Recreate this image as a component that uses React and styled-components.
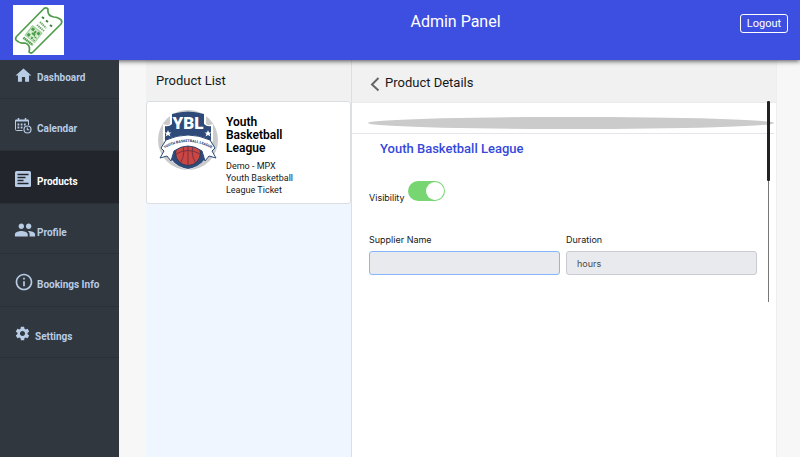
import React, { useState } from "react";
import styled, { createGlobalStyle } from "styled-components";
import { MdHome, MdPeople, MdInfoOutline, MdSettings } from "react-icons/md";

const GlobalStyle = createGlobalStyle`
  * {
    box-sizing: border-box;
  }
  body {
    margin: 0;
    font-family: Roboto, "Liberation Sans", sans-serif;
    color: #16181b;
    background-color: #f7f7f7;
  }
  h1, h2, h3, p {
    margin: 0;
    font-weight: 400;
  }
`;

const Page = styled.div`
  display: flex;
  flex-direction: column;
  min-height: 100vh;
`;

const Header = styled.header`
  display: grid;
  grid-template-columns: 1fr auto 1fr;
  align-items: start;
  height: 60px;
  padding: 5px 12px 0 13px;
  color: #fff;
  background-color: #3d4fe0;
  box-shadow: 0 1px 5px rgba(0, 0, 0, 0.7);
  z-index: 1;
`;

const HeaderTitle = styled.h1`
  padding: 7px 0 0 110px;
  font-size: 16px;
  line-height: 20px;
`;

const LogoutButton = styled.button`
  justify-self: end;
  width: 48px;
  height: 19px;
  margin-top: 9px;
  padding: 0;
  border: 1px solid #fff;
  border-radius: 3px;
  color: #fff;
  font: 11px/16px Roboto, sans-serif;
  background: none;
`;

const Content = styled.div`
  display: flex;
  flex: 1;
`;

const Sidebar = styled.nav`
  width: 119px;
  flex: none;
  background-color: #30373e;
  z-index: 2;
`;

const NavItem = styled.a`
  display: flex;
  align-items: center;
  gap: ${(props) => props.$gap || 5}px;
  height: ${(props) => props.$height || 52}px;
  padding: 3px 0 ${(props) => props.$bottom || 0}px 14px;
  border-bottom: 1px solid #293036;
  color: ${(props) => (props.$active ? "#fff" : "#b9cce6")};
  background-color: ${(props) => (props.$active ? "#22262c" : "transparent")};
  font-size: 10px;
  font-weight: 700;
  text-decoration: none;

  svg {
    flex: none;
    color: #b9cce6;
  }
  span {
    padding-top: 5px;
  }
`;

const Main = styled.main`
  display: grid;
  grid-template-columns: 206px 1fr;
  flex: 1;
  margin: 0 23px 0 27px;
`;

const ListPanel = styled.section`
  border-right: 1px solid #dcdfe2;
  background-color: #eff6ff;
`;

const ListHeader = styled.div`
  height: 41px;
  padding: 11px 10px;
  background-color: #f1f1f1;
`;

const PanelTitle = styled.h2`
  font-size: 13px;
  line-height: 20px;
`;

const ProductCard = styled.article`
  display: flex;
  gap: 8px;
  height: 103px;
  padding: 8px 11px;
  border: 1px solid #dcdfe2;
  border-radius: 3px;
  background-color: #fff;
`;

const CardBody = styled.div`
  width: 72px;
`;

const CardName = styled.h3`
  margin: 6px 0 5px;
  color: #000;
  font-size: 12px;
  font-weight: 600;
  line-height: 13px;
`;

const CardText = styled.p`
  font-size: 9px;
  line-height: 12px;
`;

const DetailsPanel = styled.section`
  border-right: 1px solid #eee;
  background-color: #fff;
`;

const DetailsHeader = styled.div`
  display: flex;
  align-items: center;
  gap: 3px;
  height: 43px;
  padding: 3px 16px 0;
  border-bottom: 1px solid #eaeaea;
  background-color: #f1f1f1;
`;

const BackButton = styled.button`
  display: flex;
  padding: 2px 0 0;
  border: 0;
  color: #666;
  background: none;
`;

const Scroller = styled.div`
  position: relative;
  height: 199px;
`;

const ScrollTrack = styled.div`
  position: absolute;
  top: -2px;
  right: 6px;
  bottom: 0;
  width: 3px;
  background: linear-gradient(#777, #777) center / 1px 100% no-repeat;
`;

const ScrollThumb = styled.div`
  height: 80px;
  border-radius: 1px;
  background-color: #222;
`;

const Banner = styled.div`
  height: 31px;
  margin-right: 2px;
  padding: 14px 0 0 16px;
  border-bottom: 1px solid #e3e4ec;
`;

const BannerImage = styled.div`
  height: 12px;
  border-radius: 50%;
  background-color: #cbcbcb;
`;

const DetailsName = styled.h3`
  padding: 5px 28px;
  color: #3548dc;
  font-size: 13px;
  font-weight: 500;
  line-height: 20px;
`;

const Form = styled.form`
  padding: 17px 19px 0 17px;
  font-family: Inter, sans-serif;
  font-size: 9px;
`;

const SwitchRow = styled.div`
  display: flex;
  align-items: flex-start;
  gap: 3px;
  height: 23px;
  line-height: 12px;

  label {
    align-self: flex-end;
  }
`;

const Switch = styled.input`
  display: flex;
  width: 37px;
  height: 20px;
  margin: 0;
  padding: 1px;
  border-radius: 10px;
  appearance: none;
  justify-content: ${(props) => (props.checked ? "flex-end" : "flex-start")};
  background-color: ${(props) => (props.checked ? "#78d672" : "#ccc")};

  &::before {
    content: "";
    width: 18px;
    height: 18px;
    border-radius: 50%;
    background-color: #fff;
  }
`;

const Fields = styled.div`
  display: grid;
  grid-template-columns: 1fr 1fr;
  gap: 6px;
  margin-top: 29px;
`;

const Field = styled.div`
  display: flex;
  flex-direction: column;
  gap: 5px;

  label {
    line-height: 13px;
  }
`;

const TextInput = styled.input`
  width: 100%;
  height: 24px;
  padding: 0 10px;
  border: 1px solid ${(props) => (props.$focused ? "#86b7fe" : "#c9cbd0")};
  border-radius: 3px;
  color: #45494e;
  background-color: #e9eaee;
  font: 9px Inter, sans-serif;
  outline: none;
`;

const TicketLogo = () => (
  <svg width="51" height="50" viewBox="0 0 51 50" role="img" aria-label="Ticket">
    <rect width="51" height="50" fill="#fff" />
    <path
      d="M31 3.500Q33 2 35 4Q34 11 41 12Q44 12 47 14Q50 16 48 19L20 47Q18 49 16 47Q18 40 12 38Q7 39 3 35Q2 33 4 31Z"
      fill="#fdfffd"
      stroke="#4f9b4c"
      strokeWidth="1.7"
      strokeLinejoin="round"
    />
    <path
      d="M29 12l2 1.500M33 15.500l2 1.500M37 20l2 1.500"
      stroke="#3f7d3c"
      strokeWidth="2"
    />
    <path
      d="M27 17l6 6M24 20l7 6"
      stroke="#6aa567"
      strokeWidth="2"
      strokeDasharray="1.3 0.7"
    />
    <g transform="rotate(38 20 30)">
      <rect x="14" y="23" width="12" height="12" fill="#d5ecd2" stroke="#9dce99" />
      <path
        d="M15 24h3v3h-3zM22 24h3v3h-3zM15 31h3v3h-3zM19 25h2v3h-2zM18 28h4v2h-4zM22 30h3v1h-3zM20 32h2v2h-2zM23 33h2v1h-2z"
        fill="#4c9d49"
      />
      <path d="M14 38h12" stroke="#4c9d49" strokeWidth="2.500" strokeDasharray="1.5 0.4" />
    </g>
  </svg>
);

const CalendarIcon = () => (
  <svg width="18" height="16" viewBox="0 0 18 16" fill="none" stroke="currentColor">
    <path d="M8.500 12.500h-6q-1 0-1-1v-9h13V7" />
    <path d="M1.500 2.500h13" strokeWidth="2" />
    <path d="M4.500 0v3m7-3v3" strokeWidth="1.500" />
    <path d="M3.500 6.500h9M3.500 9.500h5" strokeWidth="1.800" strokeDasharray="1.8 1.4" />
    <circle cx="13.500" cy="11.500" r="3.500" strokeWidth="1.200" />
    <path d="M13.300 9.500v2.300h2" strokeWidth="1.100" />
  </svg>
);

const ProductsIcon = () => (
  <svg width="18" height="18" viewBox="0 0 18 18">
    <rect x="1" y="1" width="16" height="16" rx="1.500" fill="currentColor" />
    <path
      d="M3.500 4.500h11M3.500 7.500h8M3.500 10.500h6M3.500 13.500h11"
      stroke="#22262c"
      strokeWidth="1.400"
    />
  </svg>
);

const BackIcon = () => (
  <svg width="14" height="16" viewBox="0 0 14 16" fill="none">
    <path d="M10.500 2L4 8.500l6.500 6" stroke="currentColor" strokeWidth="2" />
  </svg>
);

const LeagueLogo = () => (
  <svg width="60" height="60" viewBox="0 0 60 60" role="img" aria-label="YBL">
    <circle cx="30" cy="30" r="30" fill="#cbcbcb" />
    <path
      d="M12 5Q30-2 48 5V14Q50 16 55 14V30L51 44Q44 56 30 60Q15 56 9 44L5 30V14Q10 16 12 14Z"
      fill="#fff"
    />
    <path
      d="M14 4Q30-1 46 4V14Q49 17 53 16V33Q30 22 7 33V16Q11 17 14 14Z"
      fill="#2d4a79"
    />
    <path d="M11 39Q30 26 49 39L47 49Q41 57 30 59Q19 57 13 49Z" fill="#2d4a79" />
    <circle cx="30" cy="43" r="12.500" fill="#c94643" stroke="#2d3a5c" />
    <path
      d="M18 44Q30 37 42 44M30 31v24M24 33q4 10-1 19M36 33q-4 10 1 19"
      fill="none"
      stroke="#71303f"
      strokeWidth="0.900"
    />
    <path
      d="M2 48L6 41L3 38L8 30Q30 20 52 30L57 38L54 41L58 48L51 46L47 51L44 41Q30 31 16 41L13 51L9 46Z"
      fill="#fff"
      stroke="#2d4a79"
    />
    <path id="leagueArc" d="M4 40Q30 24 56 40" fill="none" />
    <text fill="#2d4a79" fontFamily="Roboto, sans-serif" fontSize="3.600" fontWeight="900">
      <textPath href="#leagueArc" startOffset="50%" textAnchor="middle">
        YOUTH BASKETBALL LEAGUE
      </textPath>
    </text>
    <text
      x="30"
      y="19"
      textAnchor="middle"
      fill="#fff"
      fontFamily="Roboto, sans-serif"
      fontSize="17"
      fontWeight="900"
    >
      YBL
    </text>
    <path
      d="M10 20l1 2.500h2.500l-2 1.500 1 2.500-2.500-1.500-2.500 1.500 1-2.500-2-1.500h2.500zM50 20l1 2.500h2.500l-2 1.500 1 2.500-2.500-1.500-2.500 1.500 1-2.500-2-1.500h2.500z"
      fill="#fff"
    />
  </svg>
);

const navItems = [
  { label: "Dashboard", icon: <MdHome size={19} />, height: 39, bottom: 11, gap: 4 },
  { label: "Calendar", icon: <CalendarIcon /> },
  { label: "Products", icon: <ProductsIcon />, height: 53, active: true },
  { label: "Profile", icon: <MdPeople size={22} />, height: 50, gap: 1 },
  { label: "Bookings Info", icon: <MdInfoOutline size={20} />, height: 53, gap: 3 },
  { label: "Settings", icon: <MdSettings size={17} />, height: 51, gap: 4 },
];

const App = () => {
  const [visible, setVisible] = useState(true);

  return (
    <Page>
      <GlobalStyle />
      <Header>
        <TicketLogo />
        <HeaderTitle>Admin Panel</HeaderTitle>
        <LogoutButton type="button">Logout</LogoutButton>
      </Header>
      <Content>
        <Sidebar>
          {navItems.map((item) => (
            <NavItem
              key={item.label}
              href="#"
              $active={item.active}
              $height={item.height}
              $bottom={item.bottom}
              $gap={item.gap}
            >
              {item.icon}
              <span>{item.label}</span>
            </NavItem>
          ))}
        </Sidebar>
        <Main>
          <ListPanel>
            <ListHeader>
              <PanelTitle>Product List</PanelTitle>
            </ListHeader>
            <ProductCard>
              <LeagueLogo />
              <CardBody>
                <CardName>Youth Basketball League</CardName>
                <CardText>Demo - MPX Youth Basketball League Ticket</CardText>
              </CardBody>
            </ProductCard>
          </ListPanel>
          <DetailsPanel>
            <DetailsHeader>
              <BackButton type="button" aria-label="Back">
                <BackIcon />
              </BackButton>
              <PanelTitle>Product Details</PanelTitle>
            </DetailsHeader>
            <Scroller>
              <Banner>
                <BannerImage />
              </Banner>
              <DetailsName>Youth Basketball League</DetailsName>
              <Form>
                <SwitchRow>
                  <label htmlFor="visibility">Visibility</label>
                  <Switch
                    id="visibility"
                    type="checkbox"
                    role="switch"
                    checked={visible}
                    onChange={() => setVisible(!visible)}
                  />
                </SwitchRow>
                <Fields>
                  <Field>
                    <label htmlFor="supplier">Supplier Name</label>
                    <TextInput id="supplier" $focused readOnly value="" />
                  </Field>
                  <Field>
                    <label htmlFor="duration">Duration</label>
                    <TextInput id="duration" readOnly value="hours" />
                  </Field>
                </Fields>
              </Form>
              <ScrollTrack>
                <ScrollThumb />
              </ScrollTrack>
            </Scroller>
          </DetailsPanel>
        </Main>
      </Content>
    </Page>
  );
};

export default App;
